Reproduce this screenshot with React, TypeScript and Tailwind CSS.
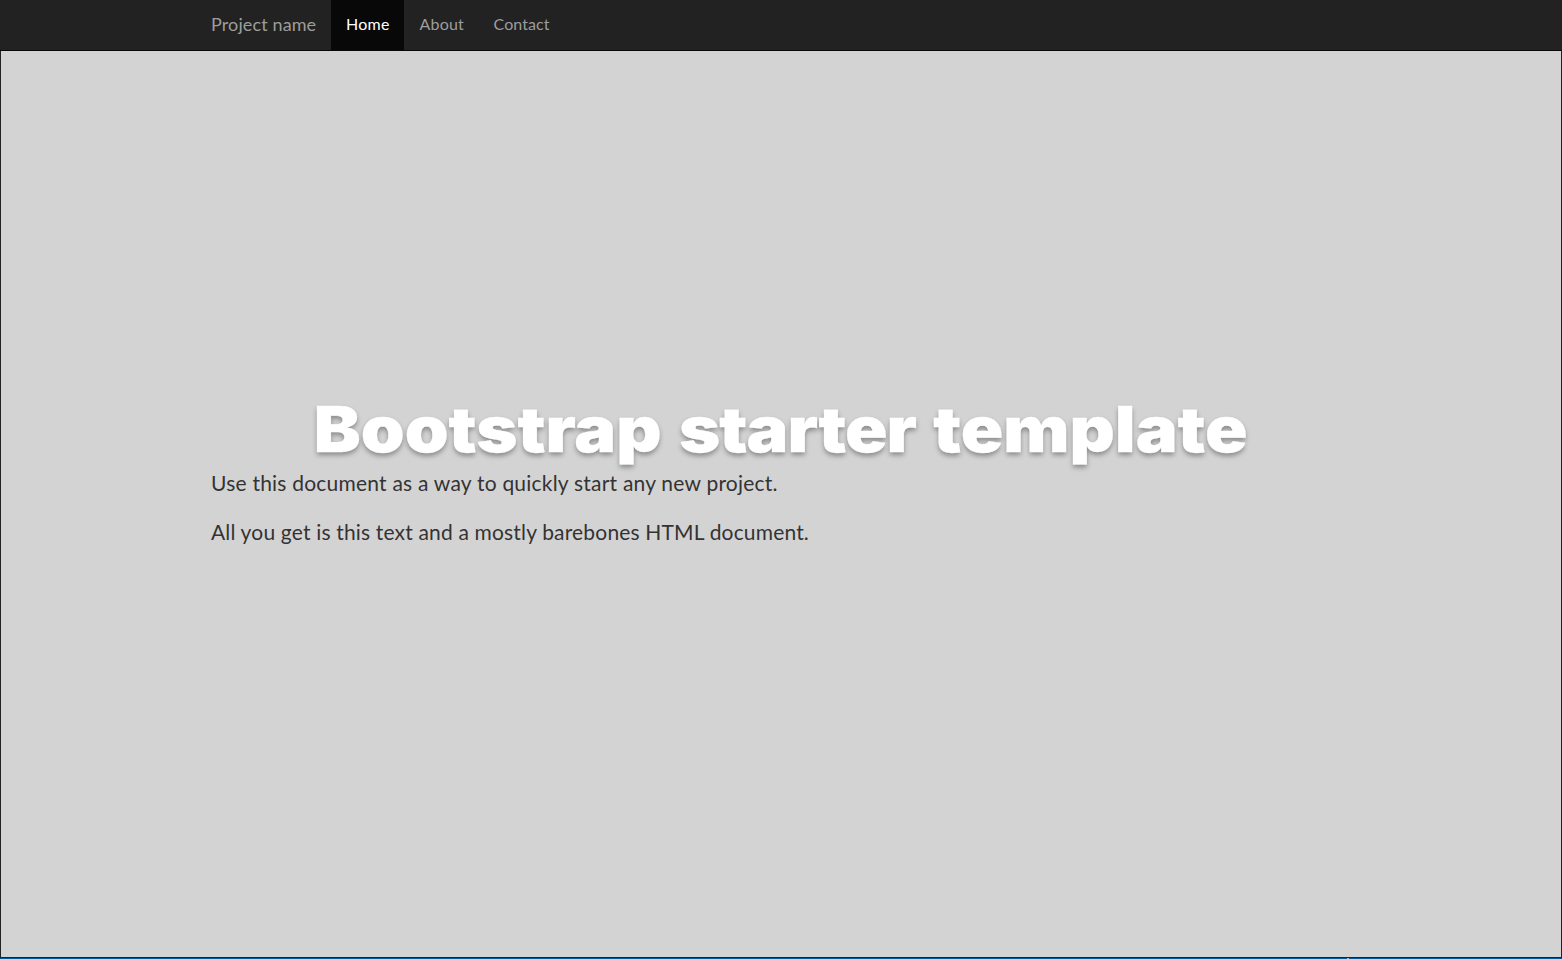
import React from "react";

const links = [
  { label: "Home", style: "w-[73px] bg-[#080808] pl-[15px] text-white tracking-[0.25px]" },
  { label: "About", style: "w-[74px] pl-[15.5px] text-[#9d9d9d] tracking-[0.2px]" },
  { label: "Contact", style: "w-[86px] pl-[15.5px] text-[#9d9d9d] tracking-[0.1px]" },
];

export default function App() {
  return (
    <div className="flex h-[959px] flex-col overflow-hidden bg-[#d3d3d3] font-['Lato',sans-serif] text-[#333]">
      <nav className="h-[51px] shrink-0 border-b border-[#080808] bg-[#222]">
        <div className="mx-auto flex h-[50px] w-[1140px]">
          <a href="#" className="flex w-[120px] items-center whitespace-nowrap pb-0.5 text-[18px] leading-5 tracking-[0.12px] text-[#9d9d9d]">
            <span>Project name</span>
          </a>
          <div className="flex">
            {links.map((link) => (
              <a key={link.label} href="#" className={`flex h-[50px] items-center pb-0.5 text-[16px] leading-5 ${link.style}`}>
                <span>{link.label}</span>
              </a>
            ))}
          </div>
        </div>
      </nav>
      <main className="flex flex-1 flex-col border-x border-[#222]">
        <div className="mx-auto mt-[342px] w-[1140px]">
          <h1 className="flex h-[73px] items-center justify-center whitespace-nowrap font-['Inter',sans-serif] text-[63px] font-black leading-[73px] text-white [-webkit-text-stroke:0.3px_white] [text-shadow:0_3px_5px_rgba(0,0,0,0.35)]">
            <span className="inline-block scale-x-[1.115] [word-spacing:3px]">
              Bootstrap <span className="tracking-[-0.9px]">starter</span> template
            </span>
          </h1>
          <p className="mt-[2px] h-[30px] whitespace-nowrap text-[21px] leading-[30px] tracking-[0.22px]">
            <span>Use this document as a way to quickly start any new project.</span>
          </p>
          <p className="mt-[19px] h-[30px] whitespace-nowrap text-[21px] leading-[30px] tracking-[0.17px]">
            <span>All you get is this text and a mostly barebones HTML document.</span>
          </p>
        </div>
      </main>
      <footer className="h-0.5 shrink-0 border-t border-[#222] bg-[#005a9e]">
        <div className="ml-[1347px] h-px w-0.5 bg-[#c0b8b0]" />
      </footer>
    </div>
  );
}
